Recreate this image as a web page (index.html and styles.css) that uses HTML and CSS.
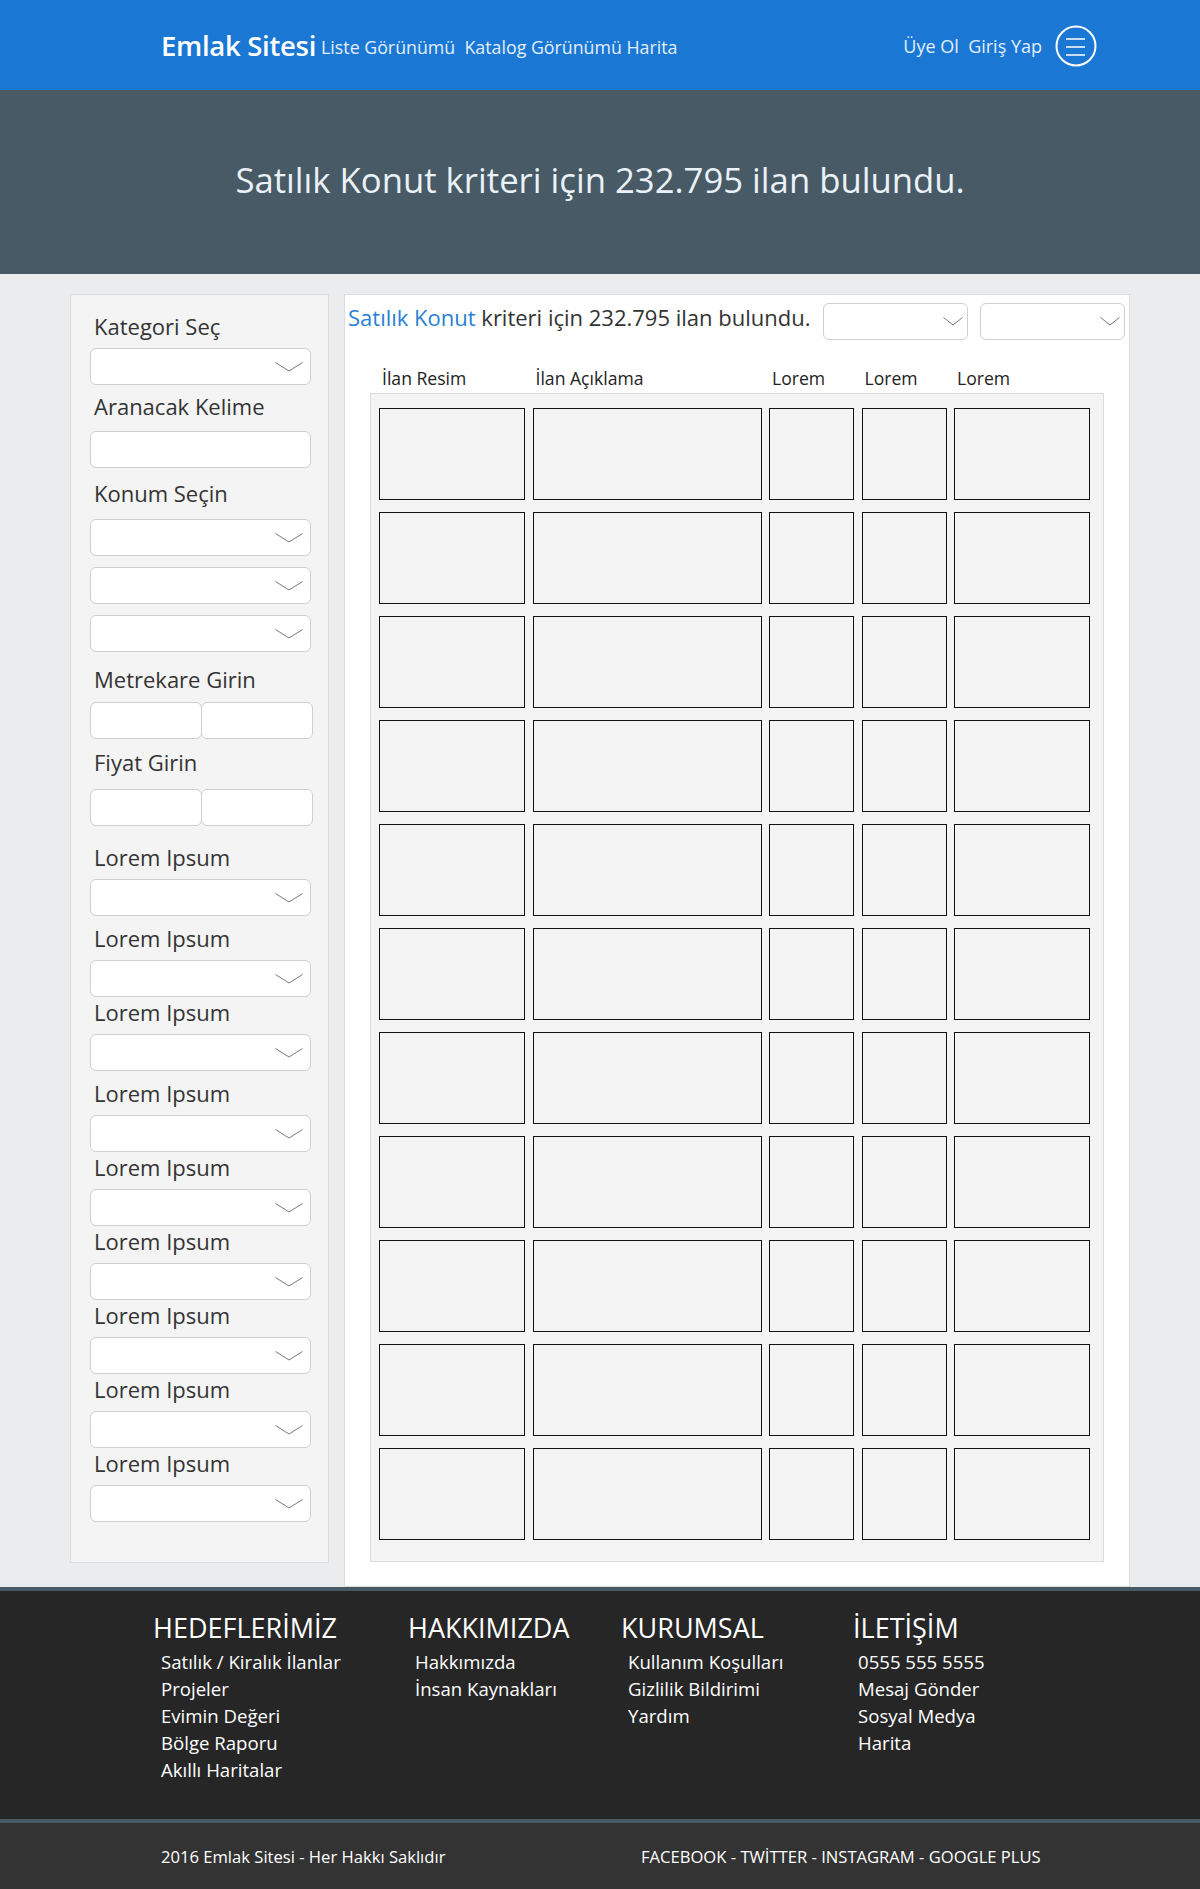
FILE: index.html
```html
<!DOCTYPE html>
<html lang="tr">
<head>
<meta charset="utf-8">
<title>Emlak Sitesi</title>
<link rel="stylesheet" href="styles.css">
</head>
<body>
<header class="topbar">
  <div class="brand">Emlak Sitesi</div>
  <nav class="nav">Liste Görünümü&nbsp; Katalog Görünümü Harita</nav>
  <div class="spacer"></div>
  <div class="auth">Üye Ol&nbsp; Giriş Yap</div>
  <svg class="burger" width="42" height="42" viewBox="0 0 42 42"><circle cx="21" cy="21" r="19.5" fill="none" stroke="#fff" stroke-width="2"/><path d="M11 14h19M11 22h19M11 30h19" stroke="#fff" stroke-width="1.6"/></svg>
</header>

<section class="banner">Satılık Konut kriteri için 232.795 ilan bulundu.</section>

<div class="content">
  <aside class="sidebar">
    <div class="field f1"><div class="label">Kategori Seç</div><div class="ctl select"><svg width="28" height="10" viewBox="0 0 28 10"><path d="M0.5 0.5L14 9L27.5 0.5" fill="none" stroke="#777" stroke-width="1"/></svg></div></div>
    <div class="field f2"><div class="label">Aranacak Kelime</div><div class="ctl"></div></div>
    <div class="field f3"><div class="label">Konum Seçin</div>
      <div class="ctl select"><svg width="28" height="10" viewBox="0 0 28 10"><path d="M0.5 0.5L14 9L27.5 0.5" fill="none" stroke="#777" stroke-width="1"/></svg></div>
      <div class="ctl select stack"><svg width="28" height="10" viewBox="0 0 28 10"><path d="M0.5 0.5L14 9L27.5 0.5" fill="none" stroke="#777" stroke-width="1"/></svg></div>
      <div class="ctl select stack"><svg width="28" height="10" viewBox="0 0 28 10"><path d="M0.5 0.5L14 9L27.5 0.5" fill="none" stroke="#777" stroke-width="1"/></svg></div>
    </div>
    <div class="field f4"><div class="label">Metrekare Girin</div><div class="pair"><div class="ctl half"></div><div class="ctl half"></div></div></div>
    <div class="field f5"><div class="label">Fiyat Girin</div><div class="pair"><div class="ctl half"></div><div class="ctl half"></div></div></div>
    <div class="field f6"><div class="label">Lorem Ipsum</div><div class="ctl select"><svg width="28" height="10" viewBox="0 0 28 10"><path d="M0.5 0.5L14 9L27.5 0.5" fill="none" stroke="#777" stroke-width="1"/></svg></div></div>
    <div class="field lo wide"><div class="label">Lorem Ipsum</div><div class="ctl select"><svg width="28" height="10" viewBox="0 0 28 10"><path d="M0.5 0.5L14 9L27.5 0.5" fill="none" stroke="#777" stroke-width="1"/></svg></div></div>
    <div class="field lo"><div class="label">Lorem Ipsum</div><div class="ctl select"><svg width="28" height="10" viewBox="0 0 28 10"><path d="M0.5 0.5L14 9L27.5 0.5" fill="none" stroke="#777" stroke-width="1"/></svg></div></div>
    <div class="field lo wide"><div class="label">Lorem Ipsum</div><div class="ctl select"><svg width="28" height="10" viewBox="0 0 28 10"><path d="M0.5 0.5L14 9L27.5 0.5" fill="none" stroke="#777" stroke-width="1"/></svg></div></div>
    <div class="field lo"><div class="label">Lorem Ipsum</div><div class="ctl select"><svg width="28" height="10" viewBox="0 0 28 10"><path d="M0.5 0.5L14 9L27.5 0.5" fill="none" stroke="#777" stroke-width="1"/></svg></div></div>
    <div class="field lo"><div class="label">Lorem Ipsum</div><div class="ctl select"><svg width="28" height="10" viewBox="0 0 28 10"><path d="M0.5 0.5L14 9L27.5 0.5" fill="none" stroke="#777" stroke-width="1"/></svg></div></div>
    <div class="field lo"><div class="label">Lorem Ipsum</div><div class="ctl select"><svg width="28" height="10" viewBox="0 0 28 10"><path d="M0.5 0.5L14 9L27.5 0.5" fill="none" stroke="#777" stroke-width="1"/></svg></div></div>
    <div class="field lo"><div class="label">Lorem Ipsum</div><div class="ctl select"><svg width="28" height="10" viewBox="0 0 28 10"><path d="M0.5 0.5L14 9L27.5 0.5" fill="none" stroke="#777" stroke-width="1"/></svg></div></div>
    <div class="field lo"><div class="label">Lorem Ipsum</div><div class="ctl select"><svg width="28" height="10" viewBox="0 0 28 10"><path d="M0.5 0.5L14 9L27.5 0.5" fill="none" stroke="#777" stroke-width="1"/></svg></div></div>
  </aside>

  <main class="panel">
    <div class="panel-head">
      <div class="result"><span class="hl">Satılık Konut</span> kriteri için 232.795 ilan bulundu.</div>
      <div class="dd"><svg width="20" height="9" viewBox="0 0 20 9"><path d="M0.5 0.5L10 8L19.5 0.5" fill="none" stroke="#777" stroke-width="1"/></svg></div>
      <div class="dd"><svg width="20" height="9" viewBox="0 0 20 9"><path d="M0.5 0.5L10 8L19.5 0.5" fill="none" stroke="#777" stroke-width="1"/></svg></div>
    </div>
    <div class="cols">
      <span>İlan Resim</span><span>İlan Açıklama</span><span>Lorem</span><span>Lorem</span><span>Lorem</span>
    </div>
    <div class="grid">
      <div class="row"><div class="cell"></div><div class="cell"></div><div class="cell"></div><div class="cell"></div><div class="cell"></div></div>
      <div class="row"><div class="cell"></div><div class="cell"></div><div class="cell"></div><div class="cell"></div><div class="cell"></div></div>
      <div class="row"><div class="cell"></div><div class="cell"></div><div class="cell"></div><div class="cell"></div><div class="cell"></div></div>
      <div class="row"><div class="cell"></div><div class="cell"></div><div class="cell"></div><div class="cell"></div><div class="cell"></div></div>
      <div class="row"><div class="cell"></div><div class="cell"></div><div class="cell"></div><div class="cell"></div><div class="cell"></div></div>
      <div class="row"><div class="cell"></div><div class="cell"></div><div class="cell"></div><div class="cell"></div><div class="cell"></div></div>
      <div class="row"><div class="cell"></div><div class="cell"></div><div class="cell"></div><div class="cell"></div><div class="cell"></div></div>
      <div class="row"><div class="cell"></div><div class="cell"></div><div class="cell"></div><div class="cell"></div><div class="cell"></div></div>
      <div class="row"><div class="cell"></div><div class="cell"></div><div class="cell"></div><div class="cell"></div><div class="cell"></div></div>
      <div class="row"><div class="cell"></div><div class="cell"></div><div class="cell"></div><div class="cell"></div><div class="cell"></div></div>
      <div class="row"><div class="cell"></div><div class="cell"></div><div class="cell"></div><div class="cell"></div><div class="cell"></div></div>
    </div>
  </main>
</div>

<footer class="footer">
  <div class="fcols">
    <div class="fcol c1"><h3>HEDEFLERİMİZ</h3><ul><li>Satılık / Kiralık İlanlar</li><li>Projeler</li><li>Evimin Değeri</li><li>Bölge Raporu</li><li>Akıllı Haritalar</li></ul></div>
    <div class="fcol c2"><h3>HAKKIMIZDA</h3><ul><li>Hakkımızda</li><li>İnsan Kaynakları</li></ul></div>
    <div class="fcol c3"><h3>KURUMSAL</h3><ul><li>Kullanım Koşulları</li><li>Gizlilik Bildirimi</li><li>Yardım</li></ul></div>
    <div class="fcol c4"><h3>İLETİŞİM</h3><ul><li>0555 555 5555</li><li>Mesaj Gönder</li><li>Sosyal Medya</li><li>Harita</li></ul></div>
  </div>
</footer>
<div class="bottom">
  <span class="copy">2016 Emlak Sitesi - Her Hakkı Saklıdır</span>
  <span class="social">FACEBOOK - TWİTTER - INSTAGRAM - GOOGLE PLUS</span>
</div>
</body>
</html>
```

FILE: styles.css
```css
* { box-sizing: border-box; }
body {
  margin: 0;
  font-family: "Open Sans", "Noto Sans", sans-serif;
  color: #333;
  background: #ebecee;
}

.topbar {
  height: 90px;
  background: #1a78d4;
  display: flex;
  align-items: center;
  padding: 0 103px 0 161px;
  color: #fff;
}
.brand { font-weight: 600; font-size: 27.5px; margin-right: 5px; letter-spacing: -0.3px; }
.nav { font-size: 17.8px; color: #e3eefa; padding-top: 4px; }
.spacer { flex: 1; }
.auth { font-size: 18px; color: #e3eefa; margin-right: 13px; padding-top: 2px; }
.burger { display: block; margin-top: 1px; }

.banner {
  height: 184px;
  background: #475a66;
  color: #eaf1f7;
  font-size: 34.7px;
  display: flex;
  align-items: center;
  justify-content: center;
  padding-bottom: 5px;
}

.content {
  display: flex;
  align-items: flex-start;
  gap: 15px;
  padding: 20px 70px 0 70px;
}

.sidebar {
  width: 259px;
  height: 1269px;
  background: #f4f4f4;
  border: 1px solid #dcdcdc;
  padding: 16px 0 0 19px;
}
.label {
  font-size: 22px;
  line-height: 30px;
  padding-left: 4px;
  color: #333;
  margin-bottom: 7px;
  white-space: nowrap;
}
.ctl {
  width: 221px;
  height: 37px;
  background: #fff;
  border: 1px solid #cfcfcf;
  border-radius: 6px;
}
.select {
  display: flex;
  align-items: center;
  justify-content: flex-end;
  padding-right: 7px;
}
.select svg { display: block; }
.stack { margin-top: 11px; }
.f2 { margin-top: 6px; }
.f2 .label { margin-bottom: 10px; }
.f3 { margin-top: 10px; }
.f3 .label { margin-bottom: 11px; }
.f4 { margin-top: 12px; }
.f4 .label { margin-bottom: 8px; }
.f5 { margin-top: 8px; }
.f5 .label { margin-bottom: 12px; }
.f6 { margin-top: 16px; }
.lo { margin-top: 0; }
.lo.wide { margin-top: 7px; }
.pair { display: flex; }
.half { width: 112px; }
.half + .half { margin-left: -1px; }

.panel {
  width: 786px;
  height: 1293px;
  background: #fff;
  border: 1px solid #dcdcdc;
  padding: 8px 4px 0 3px;
}
.panel-head {
  display: flex;
  align-items: center;
  gap: 12px;
  height: 37px;
}
.result {
  font-size: 22px;
  flex: 1;
  color: #333;
  white-space: nowrap;
  padding-bottom: 9px;
}
.hl { color: #2a7fd4; }
.dd {
  width: 145px;
  height: 37px;
  border: 1px solid #cfcfcf;
  border-radius: 6px;
  background: #fff;
  display: flex;
  align-items: center;
  justify-content: flex-end;
  padding-right: 4px;
}
.dd svg { display: block; }

.cols {
  display: grid;
  grid-template-columns: 146px 229px 85px 85px 136px;
  column-gap: 7.5px;
  margin: 26px 0 0 31px;
  font-size: 17.6px;
  line-height: 24px;
  height: 24px;
  color: #222;
}
.cols span { padding-left: 3px; white-space: nowrap; }

.grid {
  margin: 3px 0 0 22px;
  width: 734px;
  height: 1169px;
  background: #f4f4f4;
  border: 1px solid #dcdcdc;
  padding: 14px 0 0 8px;
  display: flex;
  flex-direction: column;
  gap: 12px;
}
.row {
  display: grid;
  grid-template-columns: 146px 229px 85px 85px 136px;
  column-gap: 7.5px;
  height: 92px;
}
.cell {
  border: 1.5px solid #111;
  background: #f4f4f4;
}

.footer {
  background: #262626;
  border-top: 4px solid #475a66;
  height: 232px;
  color: #fff;
  padding: 19px 0 0 153px;
}
.fcols { display: flex; }
.fcol h3 {
  margin: 0;
  font-weight: normal;
  font-size: 27px;
  line-height: 36px;
  white-space: nowrap;
}
.fcol ul { list-style: none; margin: 0; padding: 2px 0 0 8px; }
.fcol li { font-size: 18.6px; line-height: 27px; white-space: nowrap; }
.c1 { width: 255px; }
.c2 { width: 213px; }
.c3 { width: 232px; }
.c2 ul, .c3 ul { padding-left: 7px; }
.c4 ul { padding-left: 5px; }

.bottom {
  background: #333;
  border-top: 4px solid #475a66;
  height: 70px;
  display: flex;
  align-items: center;
  padding: 0 0 0 161px;
  color: #fff;
  font-size: 16.6px;
}
.copy { width: 480px; }
```
